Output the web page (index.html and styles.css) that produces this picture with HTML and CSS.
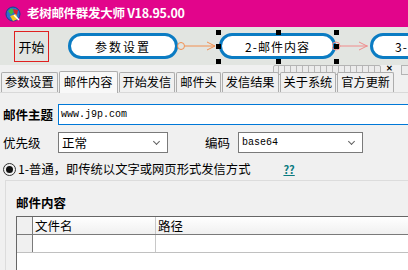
FILE: index.html
```html
<!DOCTYPE html>
<html lang="zh-CN">
<head>
  <meta charset="UTF-8" />
  <title>老树邮件群发大师</title>
  <link rel="stylesheet" href="styles.css">
</head>
<body>
  <div class="titlebar">
    <svg class="app-icon" width="16" height="16" viewBox="0 0 16 16">
      <circle cx="8" cy="8" r="7" fill="#2d6fd0" stroke="#1b3f8a" stroke-width="1"/>
      <path d="M3 5 L7 2 L9 6 L6 9 Z" fill="#3fb43f"/>
      <path d="M8 3 L13 4 L12 9 L9 7 Z" fill="#d8242c"/>
      <path d="M5 10 L11 8 L13 13 L8 15 Z" fill="#f4c21e"/>
      <path d="M9 9 L14 14" stroke="#ffffff" stroke-width="1.5"/>
    </svg>
    <span class="title">老树邮件群发大师 V18.95.00</span>
  </div>

  <div class="flow">
    <div class="start-box">开始</div>

    <div class="node node-1">参数设置</div>
    <svg class="link link-1" width="40" height="12" viewBox="0 0 40 12">
      <circle cx="4" cy="6" r="3.5" fill="none" stroke="#f29050"/>
      <line x1="8" y1="6" x2="38" y2="6" stroke="#f29050"/>
      <polyline points="30,2 38,6 30,10" fill="none" stroke="#f29050"/>
    </svg>

    <div class="node node-2">2-邮件内容</div>
    <svg class="link link-2" width="40" height="12" viewBox="0 0 40 12">
      <circle cx="4" cy="6" r="4" fill="none" stroke="#f08c8c"/>
      <line x1="8" y1="6" x2="36" y2="6" stroke="#f08c8c"/>
      <polyline points="27,2 35,6 27,10" fill="none" stroke="#f08c8c"/>
    </svg>
    <div class="node node-3">3-邮件头</div>

    <span class="handle h-tl"></span><span class="handle h-tm"></span><span class="handle h-tr"></span>
    <span class="handle h-ml"></span><span class="handle h-mr"></span>
    <span class="handle h-bl"></span><span class="handle h-bm"></span><span class="handle h-br"></span>

    <div class="hscroll"></div>
    <span class="close-glyph">✕</span>
    <div class="hscroll-2"></div>
  </div>

  <div class="tabs">
    <div class="tab">参数设置</div>
    <div class="tab active">邮件内容</div>
    <div class="tab">开始发信</div>
    <div class="tab">邮件头</div>
    <div class="tab">发信结果</div>
    <div class="tab">关于系统</div>
    <div class="tab">官方更新</div>
  </div>

  <div class="panel">
    <div class="row subject-row">
      <label class="label bold">邮件主题</label>
      <div class="input subject">www.j9p.com</div>
    </div>

    <div class="row">
      <label class="label">优先级</label>
      <div class="select priority">正常<span class="chev"></span></div>
      <label class="label enc-label">编码</label>
      <div class="select encoding">base64<span class="chev"></span></div>
    </div>

    <div class="radio-row">
      <span class="radio"><span class="dot"></span></span>
      <span class="radio-text">1-普通，即传统以文字或网页形式发信方式</span>
      <a class="help">??</a>
    </div>

    <div class="group">
      <div class="group-title">邮件内容</div>
      <div class="grid">
        <div class="grid-head">
          <div class="cell corner"></div>
          <div class="cell col-name">文件名</div>
          <div class="cell col-path">路径</div>
        </div>
        <div class="grid-row">
          <div class="cell corner"></div>
          <div class="cell col-name"></div>
          <div class="cell col-path"></div>
        </div>
      </div>
    </div>
  </div>
</body>
</html>
```

FILE: styles.css
```css
html {
  overflow: hidden;
}
body {
  margin: 0;
  width: 408px;
  height: 270px;
  overflow: hidden;
  font-family: "Noto Sans CJK SC", "Liberation Sans", sans-serif;
  font-size: 12px;
  background-color: #f0f0f0;
  color: #000;
}
.titlebar {
  height: 27px;
  background: #e2058b;
  display: flex;
  align-items: center;
  padding-left: 5px;
  gap: 6px;
}
.title {
  color: #fff;
  font-size: 12.5px;
  font-weight: bold;
  letter-spacing: -0.3px;
  line-height: 1;
}
.flow {
  position: relative;
  height: 38px;
  background: #e2e5e1;
}
.start-box {
  position: absolute;
  left: 14px;
  top: 4px;
  width: 33px;
  height: 29px;
  border: 1px solid #e02020;
  display: flex;
  align-items: center;
  justify-content: center;
  font-size: 13px;
}
.node {
  position: absolute;
  top: 6px;
  height: 20px;
  border: 3px solid #0b7cc3;
  border-radius: 13px;
  background: #fff;
  display: flex;
  align-items: center;
  justify-content: center;
  font-size: 12px;
  letter-spacing: 2px;
}
.node-1 { left: 68px; width: 104px; }
.node-2 { left: 219px; width: 111px; letter-spacing: 1px; }
.node-3 { left: 370px; width: 110px; justify-content: flex-start; padding-left: 22px; letter-spacing: 1px; }
.link {
  position: absolute;
  top: 13px;
}
.link-1 { left: 177px; }
.link-2 { left: 332px; }
.handle {
  position: absolute;
  width: 5px;
  height: 5px;
  background: #000;
}
.h-tl { left: 216px; top: 3px; }
.h-tm { left: 276px; top: 3px; }
.h-tr { left: 334px; top: 3px; }
.h-ml { left: 216px; top: 17px; }
.h-mr { left: 334px; top: 17px; }
.h-bl { left: 216px; top: 32px; }
.h-bm { left: 276px; top: 32px; }
.h-br { left: 334px; top: 32px; }
.hscroll {
  position: absolute;
  left: 273px;
  top: 38px;
  width: 106px;
  height: 8px;
  border: 1px solid #b4b4b4;
  border-radius: 2px;
  background: repeating-linear-gradient(90deg, #ececec 0 4px, #b8b8b8 4px 5px, #ececec 5px 6px);
}
.close-glyph {
  position: absolute;
  left: 386px;
  top: 37px;
  font-size: 8px;
  line-height: 8px;
  font-weight: bold;
}
.hscroll-2 {
  position: absolute;
  left: 401px;
  top: 38px;
  width: 10px;
  height: 8px;
  border: 1px solid #b4b4b4;
  background: #ececec;
}
.tabs {
  position: relative;
  display: flex;
  align-items: flex-end;
  height: 27px;
  padding-left: 1px;
  gap: 1px;
  border-bottom: 1px solid #d9d9d9;
  z-index: 2;
}
.tab {
  height: 19px;
  padding: 0 3px;
  border: 1px solid #adadad;
  border-bottom: none;
  border-radius: 2px 2px 0 0;
  background: #f0f0f0;
  font-size: 12.2px;
  line-height: 19px;
}
.tab.active {
  height: 21px;
  line-height: 20px;
  padding: 0 4px;
  margin-bottom: -1px;
  background: #f8f8f8;
}
.panel {
  padding: 0 0 0 3px;
}
.row {
  display: flex;
  align-items: center;
  height: 21px;
  margin-top: 7px;
}
.subject-row {
  margin-top: 11px;
}
.label {
  width: 55px;
  font-size: 12.5px;
}
.bold {
  font-weight: bold;
}
.input {
  flex: 1;
  height: 19px;
  border: 1px solid #0078d7;
  border-right: none;
  background: #fff;
  font-family: "Liberation Mono", monospace;
  font-size: 10px;
  line-height: 19px;
  padding-left: 2px;
}
.select {
  position: relative;
  height: 19px;
  border: 1px solid #7a7a7a;
  background: #fff;
  line-height: 19px;
  padding-left: 3px;
}
.priority {
  width: 105px;
  font-size: 12.5px;
}
.encoding {
  width: 120px;
  font-family: "Liberation Mono", monospace;
  font-size: 10px;
}
.enc-label {
  width: auto;
  margin-left: 37px;
  margin-right: 8px;
}
.chev {
  position: absolute;
  right: 8px;
  top: 6px;
  width: 4px;
  height: 4px;
  border-right: 1px solid #606060;
  border-bottom: 1px solid #606060;
  transform: rotate(45deg);
}
.radio-row {
  display: flex;
  align-items: center;
  height: 18px;
  margin-top: 7px;
}
.radio {
  width: 11px;
  height: 11px;
  border: 1px solid #333;
  border-radius: 50%;
  display: flex;
  align-items: center;
  justify-content: center;
  margin-right: 2px;
}
.dot {
  width: 7px;
  height: 7px;
  border-radius: 50%;
  background: #111;
}
.radio-text {
  font-size: 12.3px;
}
.help {
  margin-left: 33px;
  color: #0a7a80;
  font-weight: bold;
  font-size: 11px;
  text-decoration: underline;
}
.group {
  margin: 2px 0 0 2px;
  border-top: 1px solid #dcdcdc;
  border-left: 1px solid #dcdcdc;
  height: 100px;
  padding: 14px 0 0 10px;
}
.group-title {
  font-weight: bold;
  font-size: 12.5px;
  line-height: 16px;
}
.grid {
  margin-top: 5px;
  border-top: 1px solid #666;
  border-left: 1px solid #666;
  background: #fff;
  height: 80px;
}
.grid-head, .grid-row {
  display: flex;
  height: 17px;
}
.grid-head {
  background: linear-gradient(#ffffff, #f0f0f0);
  border-bottom: 1px solid #7a7a7a;
}
.grid-row {
  border-bottom: 1px solid #c0c0c0;
}
.cell {
  line-height: 17px;
  font-size: 12.5px;
  padding-left: 2px;
}
.corner {
  width: 13px;
  background: #f0f0f0;
  border-right: 1px solid #7a7a7a;
}
.col-name {
  width: 120px;
  border-right: 1px solid #c8c8c8;
}
.col-path {
  flex: 1;
}
```
